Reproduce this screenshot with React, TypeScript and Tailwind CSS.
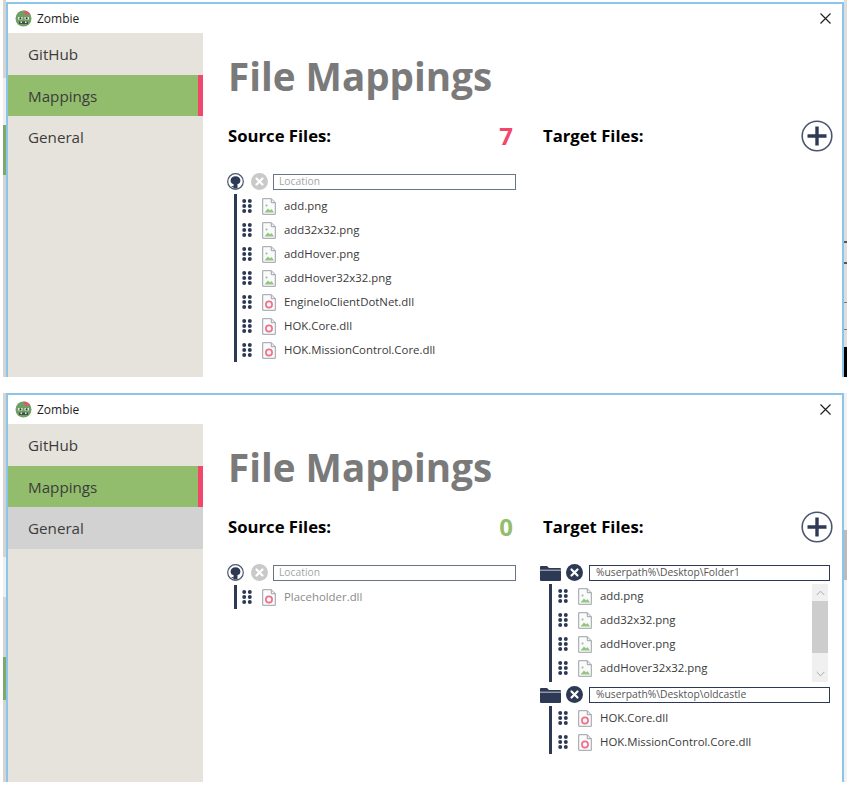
import { ReactNode } from "react";

const NAVY = "#2e3a55";

const ZombieLogo = () => (
  <svg width="17" height="17" viewBox="0 0 17 17">
    <circle cx="8.5" cy="8.5" r="8" fill="#6f9f62" />
    <path d="M8.5.5a8 8 0 0 1 7 4L10.5 4.5z" fill="#e0566f" />
    <path d="M3 7h4.5v2.6H3zM9.5 7H14v2.6H9.5z" fill="#e4e4dc" />
    <circle cx="5.4" cy="8.3" r="1" fill="#333" />
    <circle cx="11.6" cy="8.3" r="1" fill="#333" />
    <path d="M4 11.5h9v2.4H4z" fill="#3e4a44" />
    <path d="M5.5 11.5h1.5v1.4H5.5zM10 11.5h1.5v1.4H10z" fill="#eee" />
  </svg>
);

const GithubCircle = () => (
  <svg width="17" height="17" viewBox="0 0 17 17">
    <circle cx="8.5" cy="8.5" r="7.8" fill="#fff" stroke="#4a556e" strokeWidth="1.2" />
    <path d="M3.6 7.4C3.6 5 5.6 3.2 8.5 3.2s4.9 1.8 4.9 4.2c0 2-1.2 3.4-2.9 3.7v4.4H6.5v-1.3c-1 .2-1.8 0-2.2-.9l1.1-.3c.3.3.6.3 1.1.2v-2.1C4.8 10.8 3.6 9.4 3.6 7.4z" fill={NAVY} />
  </svg>
);

const CloseCircle = ({ muted }: { muted?: boolean }) => (
  <svg width="17" height="17" viewBox="0 0 17 17">
    <circle cx="8.5" cy="8.5" r="8.5" fill={muted ? "#c9c9c9" : NAVY} />
    <path d="M5.5 5.5l6 6M11.5 5.5l-6 6" stroke="#fff" strokeWidth="2.2" strokeLinecap="round" />
  </svg>
);

const FolderIcon = () => (
  <svg width="21" height="16" viewBox="0 0 21 16">
    <path d="M0 2a1 1 0 0 1 1-1h6l2 2h11a1 1 0 0 1 1 1v11a1 1 0 0 1-1 1H1a1 1 0 0 1-1-1z" fill={NAVY} />
    <path d="M0 5.2h21" stroke="#fff" strokeWidth=".7" />
  </svg>
);

const PlusCircle = () => (
  <svg width="32" height="32" viewBox="0 0 32 32">
    <circle cx="16" cy="16" r="14.8" fill="#fff" stroke="#4a556e" strokeWidth="1.6" />
    <path d="M16 6.5v19M6.5 16h19" stroke={NAVY} strokeWidth="3.4" />
  </svg>
);

const GripDots = () => (
  <svg width="10" height="14" viewBox="0 0 10 14" fill={NAVY}>
    {[2, 7, 12].map((y) => (
      <g key={y}>
        <circle cx="2.2" cy={y} r="2" />
        <circle cx="7.8" cy={y} r="2" />
      </g>
    ))}
  </svg>
);

const FileIcon = ({ kind }: { kind: "png" | "dll" }) => (
  <svg width="14" height="17" viewBox="0 0 14 17">
    <path d="M.7.7h8.6l4 4v11.6H.7z" fill="#fafafa" stroke="#9a9fa8" strokeWidth="1" />
    <path d="M9.3.7v4h4" fill="none" stroke="#9a9fa8" strokeWidth="1" />
    {kind === "png" ? (
      <>
        <circle cx="4.5" cy="7.5" r="1" fill="#8fc07a" />
        <path d="M2.5 14.5l3.5-4 2 2 1.5-1.5 2.5 3.5z" fill="#93c47d" />
      </>
    ) : (
      <circle cx="7" cy="10.5" r="3.1" fill="none" stroke="#f0708a" strokeWidth="1.7" />
    )}
  </svg>
);

const FileRow = ({ name, muted }: { name: string; muted?: boolean }) => {
  const kind = name.endsWith(".png") ? "png" : "dll";
  return (
    <div className="flex h-[24px] items-center">
      <GripDots />
      <div className="ml-[10px] flex w-[22px] shrink-0">
        <FileIcon kind={kind} />
      </div>
      <span className={`text-[11.4px] whitespace-nowrap ${muted ? "text-[#8a8a8a]" : "text-[#3a3a3a]"}`}>{name}</span>
    </div>
  );
};

const FileList = ({ children, className }: { children: ReactNode; className: string }) => (
  <div className={`ml-[6px] flex border-l-[3px] border-[#2e3a55] ${className}`}>
    <div className="min-w-0 flex-1">{children}</div>
  </div>
);

const LocationRow = () => (
  <div className="flex h-[17px] items-center">
    <div className="-ml-[1px] flex w-[23px] shrink-0"><GithubCircle /></div>
    <div className="ml-[1px] flex w-[17px] shrink-0"><CloseCircle muted /></div>
    <div className="ml-[5px] flex h-[16px] flex-1 items-center border border-[#6b7386] pl-[5px] text-[10.3px] text-[#a5a5a5]">Location</div>
  </div>
);

const FolderRow = ({ value, className }: { value: string; className?: string }) => (
  <div className={`flex h-[17px] items-center pr-[3px] ${className ?? ""}`}>
    <div className="-ml-[3px] flex w-[25px] shrink-0"><FolderIcon /></div>
    <div className="ml-[1px] flex w-[17px] shrink-0"><CloseCircle /></div>
    <div className="ml-[6px] flex h-[16px] flex-1 items-center border border-[#2e3a55] pl-[6px] text-[10.3px] text-[#555]">{value}</div>
  </div>
);

const ColumnHead = ({ title, aside }: { title: string; aside: ReactNode }) => (
  <div className="flex h-[32px] items-center justify-between">
    <span className="text-[16.7px] font-bold text-black">{title}</span>
    {aside}
  </div>
);

const Scrollbar = () => (
  <div className="flex w-[16px] shrink-0 flex-col items-center bg-[#f0f0f0]">
    <div className="flex h-[17px] items-center text-[#a8a8a8]">
      <svg width="9" height="6" viewBox="0 0 9 6"><path d="M.7 5L4.5 1.2 8.3 5" fill="none" stroke="currentColor" /></svg>
    </div>
    <div className="h-[52px] w-full bg-[#cdcdcd]" />
    <div className="flex-1" />
    <div className="flex h-[17px] items-center text-[#a8a8a8]">
      <svg width="9" height="6" viewBox="0 0 9 6"><path d="M.7 1L4.5 4.8 8.3 1" fill="none" stroke="currentColor" /></svg>
    </div>
  </div>
);

const NavItem = ({ label, active, hover }: { label: string; active?: boolean; hover?: boolean }) => (
  <div className={`flex h-[41.5px] items-center justify-between text-[15.2px] text-[#3c3c3c] ${active ? "bg-[#92bd6c]" : hover ? "bg-[#d2d2d2]" : ""}`}>
    <span className="pt-[2px] pl-[20px]">{label}</span>
    {active && <div className="h-full w-[5px] bg-[#f2476d]" />}
  </div>
);

const AppWindow = ({ height, hoverGeneral, count, countClass, source, target }: {
  height: string;
  hoverGeneral?: boolean;
  count: string;
  countClass: string;
  source: ReactNode;
  target?: ReactNode;
}) => (
  <div className={`flex w-[838px] flex-col border-t-2 border-r-2 border-l-2 border-[#8cc4ea] bg-white ${height}`}>
    <div className="flex h-[29px] shrink-0 items-center justify-between pr-[11px] pl-[7px]">
      <div className="flex items-center gap-[5px]">
        <ZombieLogo />
        <span className="text-[12px] text-[#222]">Zombie</span>
      </div>
      <svg width="11" height="11" viewBox="0 0 11 11"><path d="M.5.5l10 10M10.5.5l-10 10" stroke="#222" strokeWidth="1.2" /></svg>
    </div>
    <div className="flex min-h-0 flex-1">
      <div className="w-[195px] shrink-0 bg-[#e6e3dc]">
        <NavItem label="GitHub" />
        <NavItem label="Mappings" active />
        <NavItem label="General" hover={hoverGeneral} />
      </div>
      <div className="flex-1 pt-[15px] pl-[25px]">
        <div className="text-[38.6px] leading-[56px] font-bold text-[#7a7a7a]">File Mappings</div>
        <div className="mt-[16px] flex">
          <div className="w-[288px]">
            <ColumnHead title="Source Files:" aside={<span className={`mr-[3px] text-[24px] font-bold ${countClass}`}>{count}</span>} />
            <div className="mt-[21px]">{source}</div>
          </div>
          <div className="ml-[27px] w-[290px]">
            <ColumnHead title="Target Files:" aside={<PlusCircle />} />
            <div className="mt-[21px]">{target}</div>
          </div>
        </div>
      </div>
    </div>
  </div>
);

const sourceFiles = ["add.png", "add32x32.png", "addHover.png", "addHover32x32.png", "EngineIoClientDotNet.dll", "HOK.Core.dll", "HOK.MissionControl.Core.dll"];
const folderOne = ["add.png", "add32x32.png", "addHover.png", "addHover32x32.png"];
const folderTwo = ["HOK.Core.dll", "HOK.MissionControl.Core.dll"];

export default function App() {
  return (
    <div className="min-h-[794px] bg-white font-['Open_Sans','Noto_Sans',sans-serif]">
      {/* first window, with bits of the desktop behind it on both sides */}
      <div className="flex h-[377px] pl-[3px]">
        <div className="flex w-[3px] flex-col bg-[#d4d4d4]">
          <div className="mt-[78px] h-[47px] bg-[#eeeeee]" />
          <div className="h-[50px] bg-[#7fa86a]" />
        </div>
        <div className="mt-[2px]">
          <AppWindow
            height="h-[375px]"
            count="7"
            countClass="text-[#f2476d]"
            source={
              <>
                <LocationRow />
                <FileList className="mt-[4px] pl-[5px]">
                  {sourceFiles.map((f) => <FileRow key={f} name={f} />)}
                </FileList>
              </>
            }
          />
        </div>
        <div className="flex w-[3px] flex-col bg-[#dddddd]">
          <div className="mt-[241px] h-[2px] bg-[#555555]" />
          <div className="mt-[19px] h-[2px] bg-[#555555]" />
          <div className="mt-[38px] h-[1px] bg-[#777777]" />
          <div className="mt-[26px] h-[1px] bg-[#777777]" />
          <div className="mt-[17px] h-[30px] bg-black" />
        </div>
      </div>
      {/* second window */}
      <div className="mt-[16px] flex h-[389px] pl-[3px]">
        <div className="flex w-[3px] flex-col bg-[#d4d4d4]">
          <div className="mt-[164px] h-[40px] bg-[#f0f0f0]" />
          <div className="mt-[60px] h-[43px] bg-[#7fa86a]" />
        </div>
        <AppWindow
          height="h-[389px]"
          hoverGeneral
          count="0"
          countClass="text-[#92bd6c]"
          source={
            <>
              <LocationRow />
              <FileList className="mt-[4px] pl-[5px]">
                <FileRow name="Placeholder.dll" muted />
              </FileList>
            </>
          }
          target={
            <>
              <FolderRow value="%userpath%\Desktop\Folder1" />
              <div className="mt-[3px] ml-[6px] flex h-[98px] border-l-[3px] border-[#2e3a55] pl-[6px]">
                <div className="flex-1">
                  {folderOne.map((f) => <FileRow key={f} name={f} />)}
                </div>
                <div className="mr-[5px] flex"><Scrollbar /></div>
              </div>
              <FolderRow value="%userpath%\Desktop\oldcastle" className="mt-[4px]" />
              <FileList className="mt-[3px] pl-[6px]">
                {folderTwo.map((f) => <FileRow key={f} name={f} />)}
              </FileList>
            </>
          }
        />
        <div className="flex w-[3px] flex-col bg-[#f2f2f2]">
          <div className="mt-[137px] h-[50px] bg-[#bbbbbb]" />
        </div>
      </div>
    </div>
  );
}
